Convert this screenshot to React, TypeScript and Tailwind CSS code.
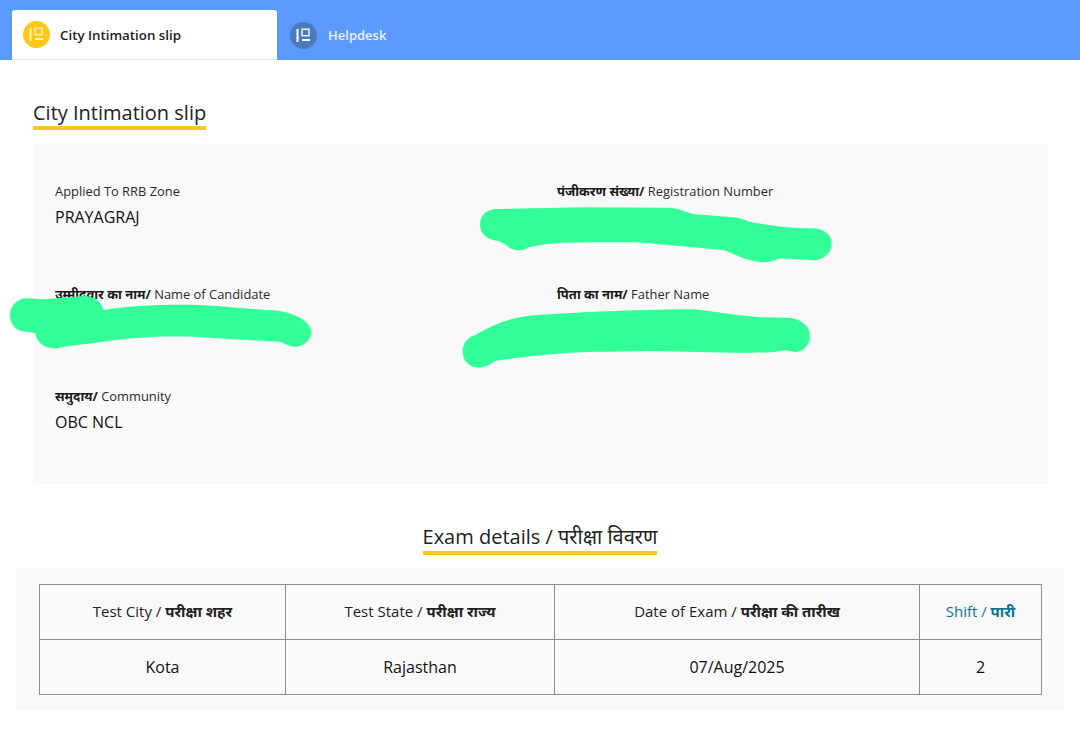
const font = { fontFamily: '"Open Sans", "Noto Sans", sans-serif' }

function SlipIcon({ className }: { className: string }) {
  return (
    <span className={`flex h-[27px] w-[27px] shrink-0 items-center justify-center rounded-full ${className}`}>
      <svg width="15" height="15" viewBox="0 0 15 15" fill="none" stroke="currentColor" strokeWidth="1.3">
        <path d="M1.5 1v13" strokeWidth="2" />
        <rect x="6" y="1.2" width="7" height="6.5" />
        <path d="M6 12h8" strokeWidth="2" />
      </svg>
    </span>
  )
}

function Field({ hi, en, value }: { hi?: string; en: string; value?: string }) {
  return (
    <div className="h-[102.5px]">
      <p className="text-[12.9px] leading-[18px] text-[#2b2b2b]">
        {hi && <b className="text-[13px] font-bold text-[#1a1a1a]">{hi}/ </b>}
        {en}
      </p>
      {value && <p className="mt-[6px] text-[16px] leading-[22px] text-[#111]">{value}</p>}
    </div>
  )
}

function Th({ en, hi, className = "" }: { en: string; hi: string; className?: string }) {
  return (
    <th className={`border border-[#8f8f8f] pb-[2px] text-[15px] font-normal ${className}`}>
      {en} / <b className="font-bold">{hi}</b>
    </th>
  )
}

export default function App() {
  return (
    <div className="relative h-[735px] overflow-hidden bg-white" style={font}>
      <div className="flex h-[60px] items-end bg-[#5b9afc] pl-[12px]">
        <div className="flex h-[50px] w-[265px] items-center gap-[10px] rounded-t-[3px] border-b border-[#e6e6e6] bg-white pl-[11px]">
          <SlipIcon className="bg-[#fbc817] text-[#fff3c4]" />
          <span className="pt-[2px] text-[13.3px] font-semibold text-[#222]">City Intimation slip</span>
        </div>
        <div className="flex h-[50px] items-center gap-[11px] pl-[13px]">
          <SlipIcon className="bg-[#4a7cbc] text-white" />
          <span className="pt-[1px] text-[13px] font-semibold text-[#eef4ff]">Helpdesk</span>
        </div>
      </div>

      <div className="px-[33px] pt-[37px]">
        <h2 className="flex h-[33px] w-fit items-end border-b-4 border-[#f9c825] text-[20px] leading-[27px] text-[#222]">
          City Intimation slip
        </h2>
        <div className="mt-[14px] grid h-[340px] w-[1015px] grid-cols-[502px_1fr] bg-[#f9f9f9] pl-[22px] pt-[38px]">
          <Field en="Applied To RRB Zone" value="PRAYAGRAJ" />
          <Field hi="पंजीकरण संख्या" en="Registration Number" />
          <Field hi="उम्मीदवार का नाम" en="Name of Candidate" />
          <Field hi="पिता का नाम" en="Father Name" />
          <Field hi="समुदाय" en="Community" value="OBC NCL" />
        </div>
      </div>

      <h2 className="mx-auto mt-[38px] w-fit border-b-4 border-[#f9c825] text-[20px] leading-[29px] text-[#222]">
        Exam details / परीक्षा विवरण
      </h2>

      <div className="mx-[16px] mt-[13px] h-[143px] bg-[#f9f9f9] px-[23px] pt-[16px]">
        <table className="h-[111px] w-[1002px] table-fixed border-collapse text-center text-[#222]">
          <colgroup>
            <col className="w-[246px]" />
            <col className="w-[269px]" />
            <col className="w-[365px]" />
            <col className="w-[122px]" />
          </colgroup>
          <thead>
            <tr className="h-[55px]">
              <Th en="Test City" hi="परीक्षा शहर" />
              <Th en="Test State" hi="परीक्षा राज्य" />
              <Th en="Date of Exam" hi="परीक्षा की तारीख" />
              <Th en="Shift" hi="पारी" className="text-[#0e7490]" />
            </tr>
          </thead>
          <tbody>
            <tr className="h-[55px] text-[16px] text-[#111]">
              <td className="border border-[#8f8f8f]">Kota</td>
              <td className="border border-[#8f8f8f]">Rajasthan</td>
              <td className="border border-[#8f8f8f]">07/Aug/2025</td>
              <td className="border border-[#8f8f8f]">2</td>
            </tr>
          </tbody>
        </table>
      </div>

      {/* hand drawn marker covering the personal data */}
      <svg className="pointer-events-none absolute left-0 top-0" width="1080" height="735" fill="#33ff99">
        <g transform="translate(450 170) scale(0.3333)">
          <path d="M90 165C90 135 110 118 140 117L400 112L660 113C690 116 710 128 735 133L850 142C870 143 885 152 905 157C960 165 1000 174 1090 175C1125 177 1145 195 1145 222C1145 250 1120 270 1090 271L990 265C970 275 950 278 930 276C890 272 860 255 820 240L620 222C560 215 500 217 340 218C300 220 270 224 235 232C220 243 190 248 165 222L145 213C110 210 90 190 90 165Z" />
          <path d="M38 545C38 520 50 505 75 495C130 465 170 445 240 437C400 425 600 418 730 418C800 425 850 437 940 442L1020 443C1055 448 1080 470 1080 497C1080 525 1060 546 1035 546L1000 540C980 548 950 548 850 548L600 543L480 545C350 545 250 555 135 573C115 590 90 595 80 592C55 590 38 570 38 545Z" />
        </g>
        <g transform="translate(0 170) scale(0.3333)">
          <path d="M30 435C30 405 55 385 80 385L130 388L250 378C285 378 305 395 310 420C400 405 550 400 650 408L800 420C860 420 930 445 935 485C935 510 910 530 885 530C865 530 855 520 840 515L650 505C550 495 400 500 300 517L190 530C160 542 115 535 105 490L85 485C50 487 30 465 30 435Z" />
        </g>
      </svg>
    </div>
  )
}
